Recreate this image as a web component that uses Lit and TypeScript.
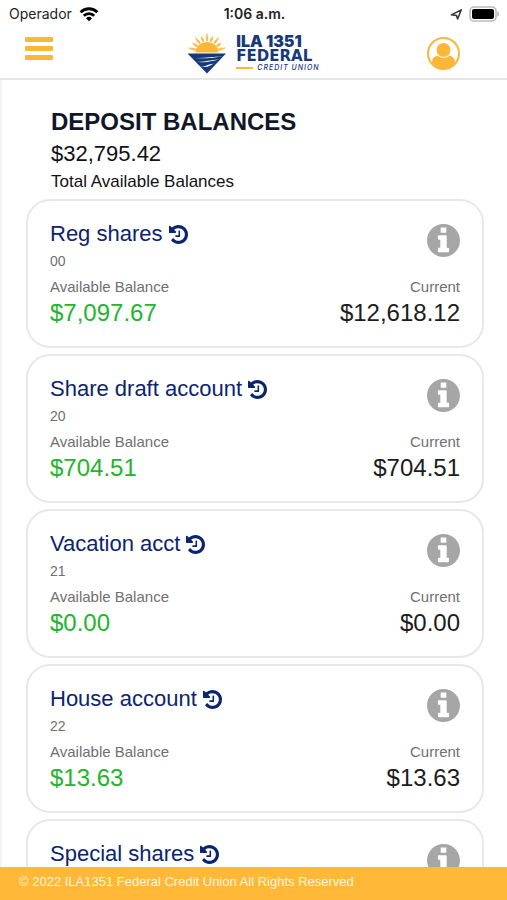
import { LitElement, html, css, svg } from "lit";
import { customElement, property } from "lit/decorators.js";

interface Account {
  name: string;
  suffix: string;
  available: string;
  current: string;
}

const ACCOUNTS: Account[] = [
  { name: "Reg shares", suffix: "00", available: "$7,097.67", current: "$12,618.12" },
  { name: "Share draft account", suffix: "20", available: "$704.51", current: "$704.51" },
  { name: "Vacation acct", suffix: "21", available: "$0.00", current: "$0.00" },
  { name: "House account", suffix: "22", available: "$13.63", current: "$13.63" },
  { name: "Special shares", suffix: "23", available: "$0.00", current: "$0.00" },
];

const RAY_ANGLES = [-76, -57, -38, -19, 0, 19, 38, 57, 76];

@customElement("status-bar")
class StatusBar extends LitElement {
  static styles = css`
    :host {
      display: grid;
      grid-template-columns: 1fr auto 1fr;
      align-items: center;
      height: 28px;
      padding: 0 7px 0 9px;
      font: 14px/20px Inter, sans-serif;
      color: #222;
    }
    .carrier {
      display: flex;
      align-items: center;
      gap: 7px;
    }
    .time {
      font-weight: 600;
    }
    .power {
      display: flex;
      align-items: center;
      justify-content: flex-end;
      gap: 6px;
    }
    svg {
      display: block;
    }
  `;

  render() {
    return html`
      <div class="carrier">
        <span>Operador</span>
        <svg width="20" height="15" viewBox="0 0 20 15" fill="none" stroke="#000" stroke-width="2.8" aria-label="Wi-Fi">
          <path d="M1.6 5.2a12 12 0 0 1 16.8 0" />
          <path d="M4.8 8.7a7.4 7.4 0 0 1 10.4 0" />
          <path d="M10 14.2l-3-3a4.3 4.3 0 0 1 6 0z" fill="#000" stroke="none" />
        </svg>
      </div>
      <div class="time">1:06 a.m.</div>
      <div class="power">
        <svg width="13" height="13" viewBox="0 0 13 13" fill="none" stroke="#333" stroke-width="1.5" stroke-linejoin="round" aria-label="Location">
          <path d="M1.300 6.800L11.300 1.800 7.600 11 6.500 7.600z" />
        </svg>
        <svg width="31" height="16" viewBox="0 0 31 16" aria-label="Battery">
          <rect x="1" y="1" width="26" height="14" rx="4" fill="#fff" stroke="#bbb" stroke-width="1.6" />
          <rect x="3" y="3" width="22" height="10" rx="2" fill="#000" />
          <path d="M28.400 5.400c2 .6 2 4.600 0 5.200z" fill="#aaa" />
        </svg>
      </div>
    `;
  }
}

@customElement("brand-logo")
class BrandLogo extends LitElement {
  static styles = css`
    :host {
      display: flex;
      align-items: center;
      gap: 9px;
      color: #17397a;
    }
    svg {
      display: block;
    }
    .words {
      display: flex;
      flex-direction: column;
      font: 900 16px/15px Inter, sans-serif;
    }
    .federal {
      font: 700 15px/15px "DejaVu Sans", sans-serif;
    }
    .union {
      display: flex;
      align-items: center;
      gap: 4px;
      font: italic 500 7px/8px Inter, sans-serif;
      letter-spacing: 1px;
      white-space: nowrap;
    }
    .rule {
      flex: none;
      width: 17px;
      height: 2px;
      background: #fbb738;
    }
  `;

  render() {
    return html`
      <svg width="40" height="41" viewBox="0 0 40 41" aria-hidden="true">
        <path d="M8.500 19.500a11.500 10.500 0 0 1 23 0z" fill="#fbb738" />
        ${RAY_ANGLES.map(
          (a, i) => svg`<path d="M19 5.500L20 ${i % 2 ? 2.5 : 0.5}L21 5.500L20.500 8L19.500 8z" fill="#fbb738" stroke="#fbb738" stroke-width="0.5" transform="rotate(${a} 20 19.500)" />`,
        )}
        <path d="M0.500 20.500H39L20 40.500z" fill="#17397a" />
        <path d="M5 24.500c8 1.500 19-.5 31-1.500-9 1.500-14 3.500-31 1.500z" fill="#fff" />
        <path d="M8 28.500c8 1 14-1.500 24-2-8 1.500-13 4-24 2z" fill="#fff" />
        <path d="M13 33.500c6 .5 7-2 14-3-4 2-6 4.500-14 3z" fill="#fff" />
      </svg>
      <div class="words">
        <span>ILA 1351</span>
        <span class="federal">FEDERAL</span>
        <span class="union"><span class="rule"></span>CREDIT UNION</span>
      </div>
    `;
  }
}

@customElement("account-card")
class AccountCard extends LitElement {
  @property({ attribute: false }) account!: Account;

  static styles = css`
    :host {
      display: block;
      box-sizing: border-box;
      padding: 19px 22px 20px;
      border: 2px solid #e8e8e8;
      border-radius: 24px;
      background: #fff;
      color: #707070;
      font-size: 15px;
      line-height: 26px;
    }
    .top,
    .line {
      display: flex;
      justify-content: space-between;
    }
    .name {
      display: flex;
      align-items: center;
      gap: 6px;
      margin: 0;
      font-size: 22px;
      font-weight: 400;
      line-height: 28px;
      color: #0b2470;
    }
    .suffix {
      font-size: 14px;
    }
    button {
      padding: 0;
      border: 0;
      background: none;
      cursor: pointer;
    }
    .info {
      align-self: flex-start;
      margin-top: 4px;
    }
    svg {
      display: block;
    }
    .amount {
      font-size: 24px;
      color: #1c1c1c;
    }
    .available {
      color: #22b52c;
    }
  `;

  render() {
    const a = this.account;
    return html`
      <div class="top">
        <div>
          <h2 class="name">
            ${a.name}
            <button aria-label="History of ${a.name}">
              <svg width="19" height="19" viewBox="64 128 1536 1536" fill="#0b2470">
                <path d="M1600 896q0 156-61 298t-164 245-245 164-298 61q-172 0-327-72.500t-264-204.500q-7-10-6.500-22.500t8.500-20.500l137-138q10-9 25-9 16 2 23 12 73 95 179 147t225 52q104 0 198.500-40.500t163.500-109.500 109.500-163.500 40.500-198.500-40.500-198.500-109.500-163.500-163.500-109.500-198.500-40.500q-98 0-188 35.500t-160 101.500l137 138q31 30 14 69-17 40-59 40H128q-26 0-45-19t-19-45V256q0-42 40-59 39-17 69 14l130 129q107-101 244.500-156.500T832 128q156 0 298 61t245 164 164 245 61 298zm-640-288v448q0 14-9 23t-23 9H608q-14 0-23-9t-9-23v-64q0-14 9-23t23-9h224V608q0-14 9-23t23-9h64q14 0 23 9t9 23z" />
              </svg>
            </button>
          </h2>
          <div class="suffix">${a.suffix}</div>
        </div>
        <button class="info" aria-label="Details of ${a.name}">
          <svg width="33" height="33" viewBox="8 8 496 496" fill="#a6a6a6">
            <path d="M256 8C119.043 8 8 119.083 8 256c0 136.997 111.043 248 248 248s248-111.003 248-248C504 119.083 392.957 8 256 8zm-42 54h84v78h-84zM328 432H184c-7 0-12-5-12-12v-44c0-7 5-12 12-12h24V244h-24c-7 0-12-5-12-12v-44c0-7 5-12 12-12h108c7 0 12 5 12 12v176h24c7 0 12 5 12 12v44c0 7-5 12-12 12z" />
          </svg>
        </button>
      </div>
      <div class="line"><span>Available Balance</span><span>Current</span></div>
      <div class="line amount"><span class="available">${a.available}</span><span>${a.current}</span></div>
    `;
  }
}

@customElement("app-root")
class AppRoot extends LitElement {
  static styles = css`
    :host {
      display: flex;
      flex-direction: column;
      height: 100vh;
      overflow: hidden;
      background: #fff;
      color: #111;
      font-family: "Liberation Sans", Arial, sans-serif;
    }
    header {
      display: grid;
      grid-template-columns: 1fr auto 1fr;
      align-items: center;
      box-sizing: border-box;
      height: 52px;
      border-bottom: 2px solid #e6e6e6;
    }
    button {
      padding: 0;
      border: 0;
      background: none;
      cursor: pointer;
    }
    svg {
      display: block;
    }
    .menu {
      justify-self: start;
      padding: 0 0 8px 25px;
    }
    .profile {
      justify-self: end;
      padding-right: 47px;
    }
    main {
      flex: 1;
      min-height: 0;
      overflow-y: auto;
      scrollbar-width: none;
      padding: 28px 23px 0 24px;
      border-left: 2px solid #f4f4f4;
    }
    .summary {
      padding: 0 25px 7px;
    }
    h1 {
      margin: 0;
      font-size: 24px;
      line-height: 28px;
      color: #0f1728;
    }
    .total {
      font-size: 22px;
      line-height: 36px;
    }
    .caption {
      font-size: 17px;
      line-height: 20px;
    }
    .cards {
      display: flex;
      flex-direction: column;
      gap: 6px;
    }
    footer {
      padding: 5px 19px 8px;
      background: #ffb838;
      color: #fff6df;
      font-size: 13px;
      line-height: 20px;
    }
  `;

  render() {
    return html`
      <status-bar></status-bar>
      <header>
        <button class="menu" aria-label="Menu">
          <svg width="28" height="24" viewBox="0 0 28 24" fill="#fbb738">
            <rect width="28" height="5" rx="1" />
            <rect y="9" width="28" height="5" rx="1" />
            <rect y="18" width="28" height="5" rx="1" />
          </svg>
        </button>
        <brand-logo></brand-logo>
        <button class="profile" aria-label="Profile">
          <svg width="33" height="33" viewBox="0 0 33 33">
            <circle cx="16.500" cy="16.500" r="15.500" fill="#fff" stroke="#fbb738" stroke-width="2" />
            <circle cx="16.500" cy="13" r="7" fill="#fbb738" />
            <path d="M5 26c0-5 2-7 6-7 3.500 2.600 7.500 2.600 11 0 4 0 6 2 6 7-6 7.500-17 7.500-23 0z" fill="#fbb738" />
          </svg>
        </button>
      </header>
      <main>
        <section class="summary">
          <h1>DEPOSIT BALANCES</h1>
          <div class="total">$32,795.42</div>
          <div class="caption">Total Available Balances</div>
        </section>
        <section class="cards">
          ${ACCOUNTS.map((a) => html`<account-card .account=${a}></account-card>`)}
        </section>
      </main>
      <footer>© 2022 ILA1351 Federal Credit Union All Rights Reserved</footer>
    `;
  }
}
